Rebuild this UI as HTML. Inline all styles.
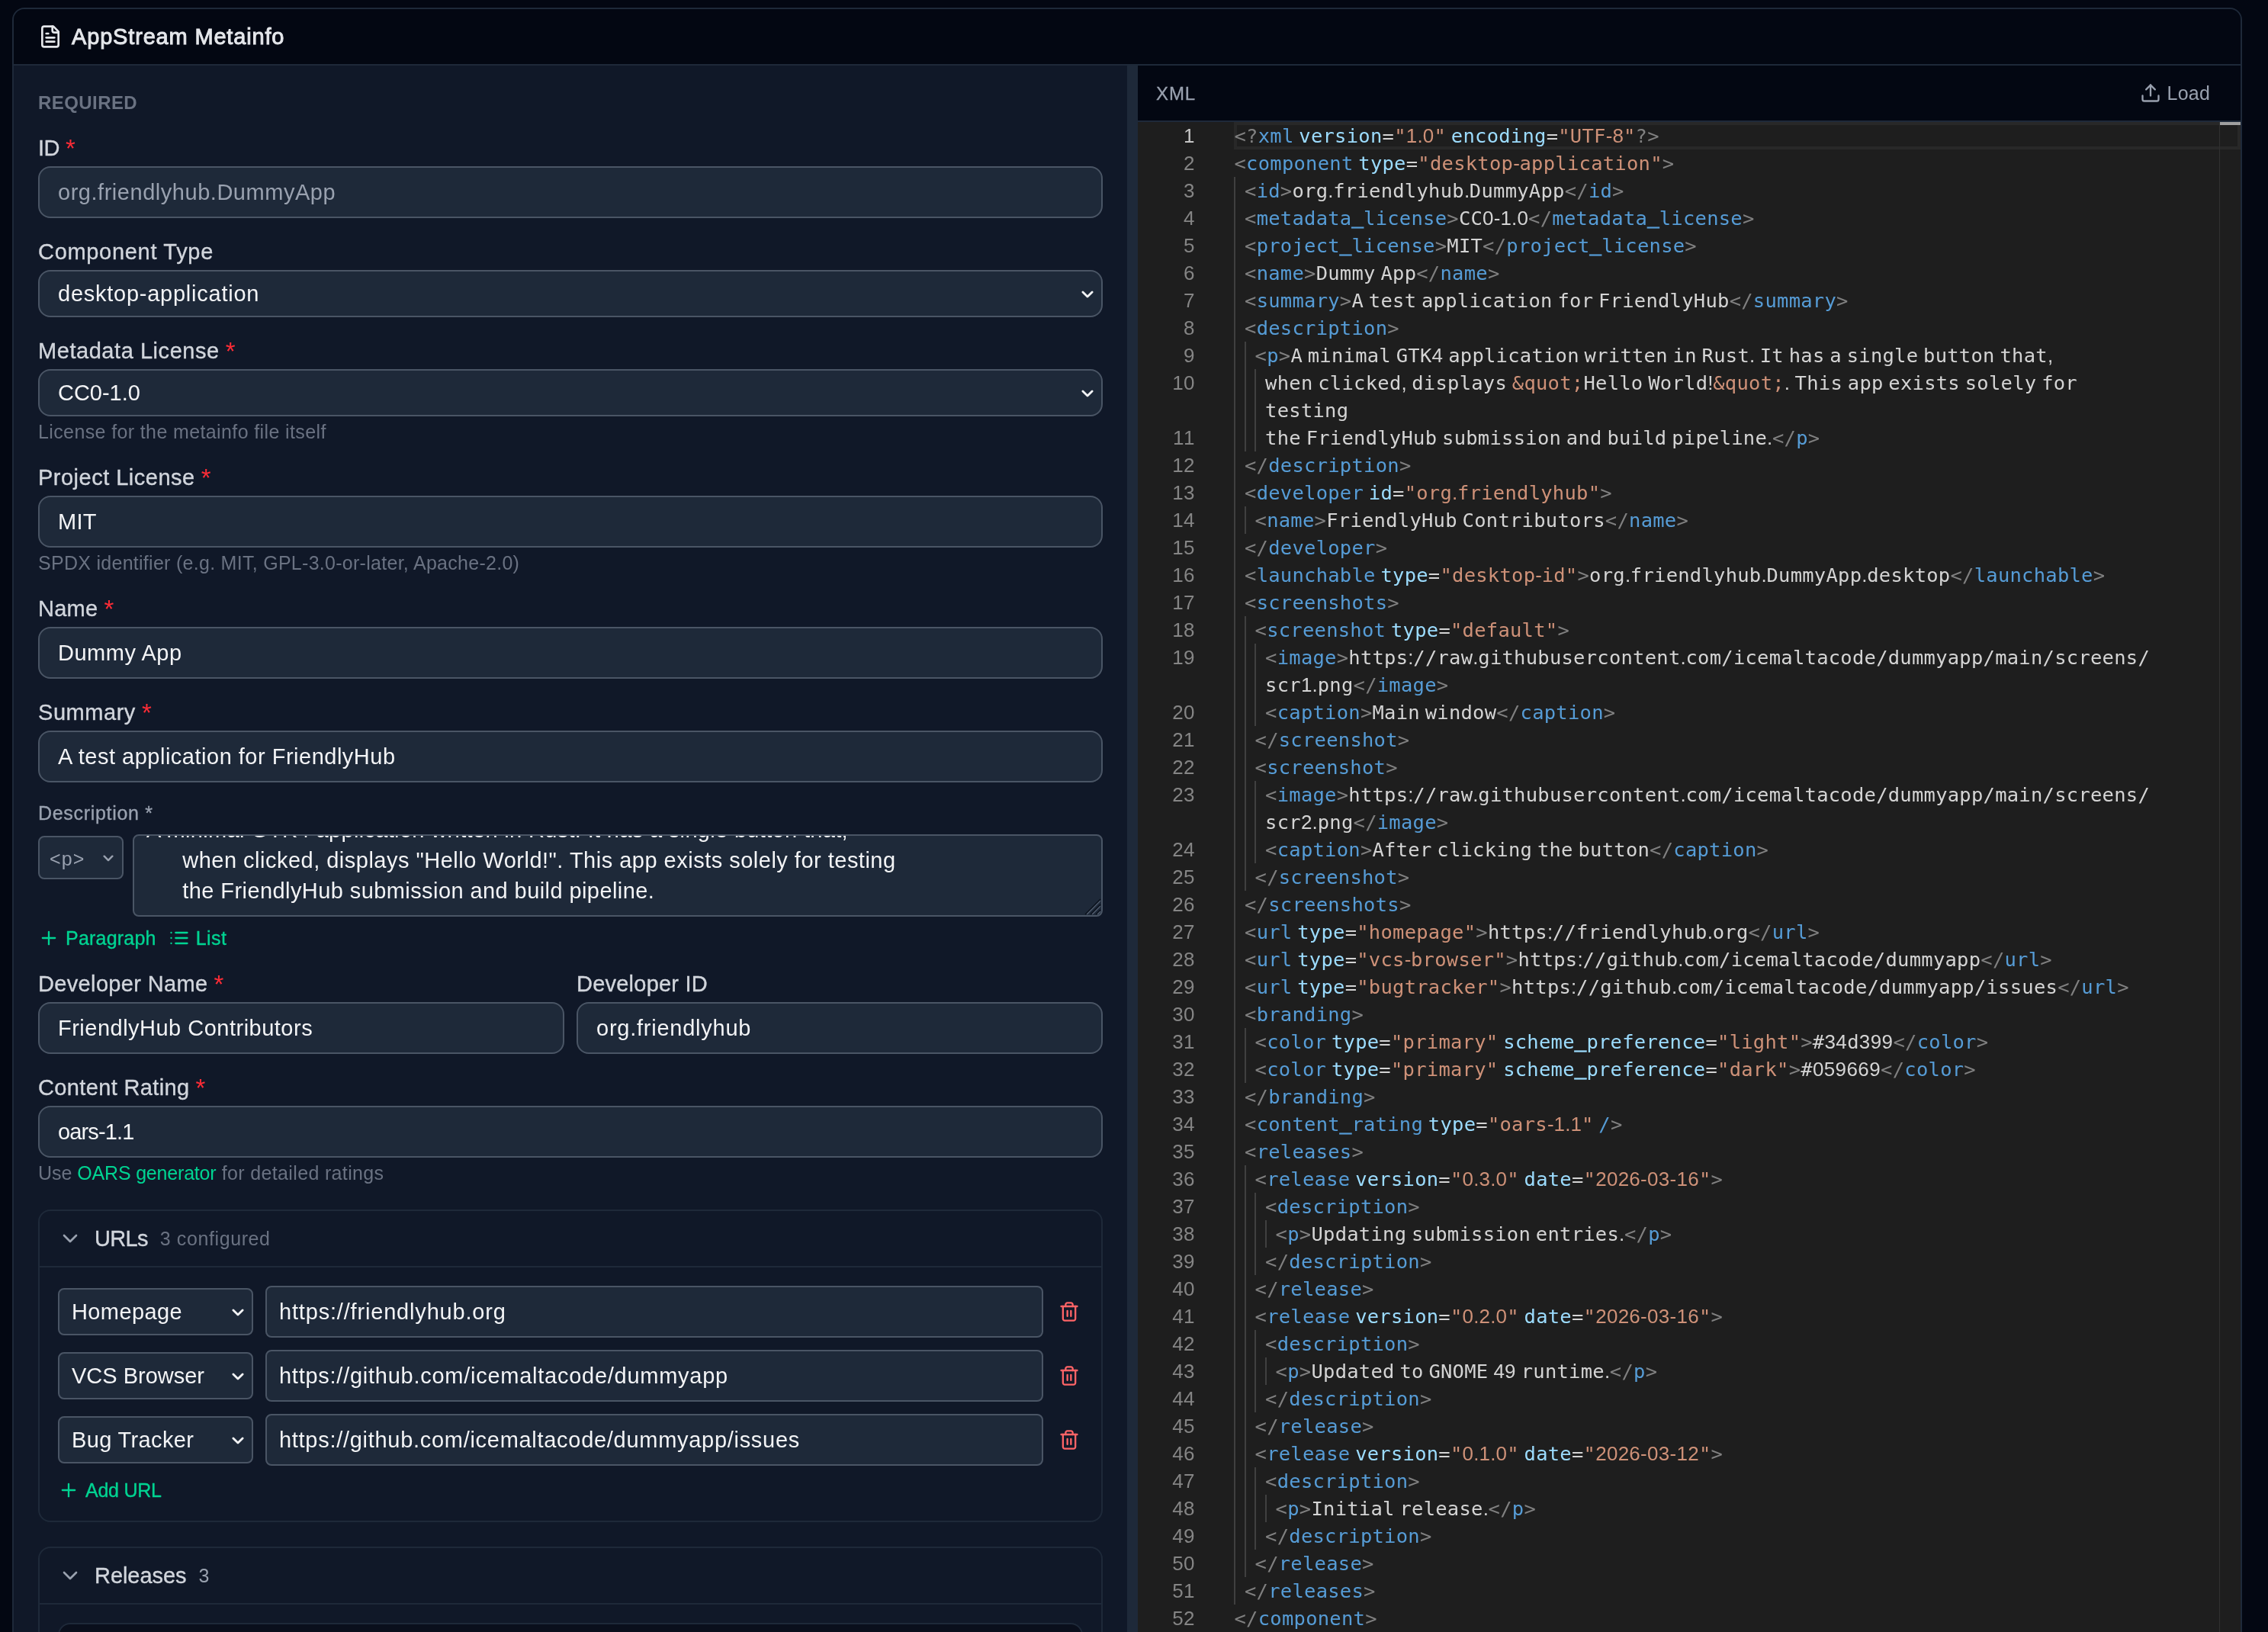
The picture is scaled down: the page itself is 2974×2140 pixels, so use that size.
<!DOCTYPE html>
<html lang="en"><head><meta charset="utf-8"><title>AppStream Metainfo</title>
<style>
*{box-sizing:border-box}
html,body{margin:0;padding:0}
body{width:2974px;height:2140px;overflow:hidden;background:#030712;position:relative;font-family:"Liberation Sans",sans-serif;font-size:29px;color:#f3f4f6}
.card{will-change:transform;position:absolute;left:16px;top:10px;width:2924px;height:2300px;border:2px solid #1e2939;border-radius:16px;background:#101828;overflow:hidden}
.hdr{position:absolute;left:0;top:0;right:0;height:74px;background:#030712;border-bottom:2px solid #1e2939;display:flex;align-items:center;padding-left:32px;color:#e5e7eb}
.hdr span{margin-left:12px;line-height:40px}
.left{position:absolute;left:0;top:74px;width:1460px;bottom:0;padding:33px 32px 0 32px;background:#101828}
.strip{position:absolute;left:1460px;top:74px;width:14px;bottom:0;background:#1e2939}
.right{position:absolute;left:1474px;top:74px;right:0;bottom:0;background:#1e1e1e}
.xh{position:absolute;left:0;top:0;right:0;height:74px;background:#030712;border-bottom:2px solid #1e2939;color:#99a1af}
.xh .xml{position:absolute;left:24px;top:21px;line-height:32px;font-size:24px;letter-spacing:.9px;-webkit-text-stroke:.3px}
.xh .load{font-size:25px;position:absolute;right:40px;top:20px;height:32px;display:flex;align-items:center;line-height:32px}
.xh .load span{margin-left:8px}
.req-h{font-size:24px;height:32px;line-height:32px;color:#6a7282}
.lbl{height:40px;line-height:40px;margin-bottom:4px;color:#d1d5dc;white-space:pre}
.req{color:#fb2c36;font-size:33px;line-height:0;position:relative;top:2px}
.inp{height:68px;border:2px solid #4a5565;border-radius:16px;background:#1e2939;padding:0 24px;line-height:64px;color:#f3f4f6;white-space:pre;position:relative;overflow:hidden}
.sel{height:62px;line-height:58px}
.hint{font-size:25px;height:32px;line-height:32px;margin-top:4px;color:#6a7282;white-space:pre}
.dlbl{font-size:25px;height:32px;line-height:32px;color:#99a1af;margin-bottom:12px}
.drow{display:flex;align-items:flex-start}
.psel{font-size:25px;width:112px;height:57px;margin-top:2px;border:2px solid #4a5565;border-radius:8px;background:#1e2939;line-height:57px;padding-left:13px;color:#99a1af;position:relative;flex:none}
.ta{margin-left:12px;flex:1;height:108px;border:2px solid #4a5565;border-radius:8px;background:#1e2939;position:relative;overflow:hidden}
.tain{margin-top:-28px;padding-left:16px;line-height:40px;white-space:pre;color:#f3f4f6}
.grip{position:absolute;right:0;bottom:0}
.dbtns{display:flex;margin-top:12px}
.gbtn{font-size:25px;display:flex;align-items:center;height:32px;line-height:32px;color:#00d492;margin-right:16px}
.gbtn span{margin-left:8px}
.two{display:flex}
.two>div{flex:1}
.two>div+div{margin-left:16px}
.box{border:2px solid #1e2939;border-radius:16px}
.bhd{height:74px;border-bottom:2px solid #1e2939;display:flex;align-items:center;padding-left:24px;line-height:40px}
.bbd{padding:24px}
.urow{display:flex;align-items:center}
.usel{width:256px;flex:none;border-radius:8px;padding:0 16px}
.uinp{flex:1;margin-left:16px;border-radius:8px;padding:0 16px}
.trash{margin-left:16px;padding:4px;color:#ff6467;flex:none}
.rel{height:200px;border:2px solid #1e2939;border-radius:16px;background:#0a0f1c}
.ed{position:absolute;left:0;top:74px;right:0;bottom:0;background:#1e1e1e;overflow:hidden;font-family:"DejaVu Sans Mono",monospace;font-size:25.5px;line-height:36px;letter-spacing:.25px;color:#d4d4d4}
.row{position:absolute;left:0;right:0;height:36px;white-space:pre}
.row i{font-style:normal;font-family:"Liberation Sans",sans-serif;font-size:26px}
.ln{position:absolute;right:1371.5px;top:0;font-weight:400;font-size:26px;font-family:"Liberation Sans",sans-serif;color:#858585}
.ln.act{color:#c6c6c6}
.row em{font-style:normal;position:relative;top:-2.4px;-webkit-text-stroke:1.2px}
.row u{position:absolute;top:0;width:2px;height:36px;background:#404040;text-decoration:none}
.code{position:absolute;top:0}
.d{color:#808080}.t{color:#569cd6}.a{color:#9cdcfe}.s{color:#ce9178}
.cl{position:absolute;left:126px;top:0;right:0;height:36px;border:4px solid #282828}
.ovr{position:absolute;right:27px;top:0;bottom:0;width:1px;background:#303030}
.ovc{position:absolute;right:0;top:0;width:27px;height:4px;background:#a0a0a0}
</style></head>
<body>
<div class="card">
<div class="hdr"><svg width="32" height="32" viewBox="0 0 24 24" fill="none" stroke="currentColor" stroke-width="2" stroke-linecap="round" stroke-linejoin="round" style="display:block;flex:none;"><path d="M15 2H6a2 2 0 0 0-2 2v16a2 2 0 0 0 2 2h12a2 2 0 0 0 2-2V7Z"/><path d="M14 2v4a2 2 0 0 0 2 2h4"/><path d="M10 9H8"/><path d="M16 13H8"/><path d="M16 17H8"/></svg><span style="font-size:29px;letter-spacing:0.83px;-webkit-text-stroke:.95px;">AppStream Metainfo</span></div>
<div class="left"><div class="req-h"><span style="font-size:24px;font-weight:700;letter-spacing:0.43px">REQUIRED</span></div><div class="fld" style="margin-top:23px"><div class="lbl"><span style="font-size:29px;letter-spacing:-0.58px;-webkit-text-stroke:.35px;">ID</span><span style="font-size:29px"> </span><span class="req">*</span></div><div class="inp" style="color:#99a1af;"><span style="font-size:29px;letter-spacing:0.53px;">org.friendlyhub.DummyApp</span></div></div><div class="fld" style="margin-top:24px"><div class="lbl"><span style="font-size:29px;letter-spacing:0.69px;-webkit-text-stroke:.35px;">Component Type</span></div><div class="inp sel" style=""><span style="font-size:29px;letter-spacing:0.75px;">desktop-application</span><svg width="16" height="10.0" viewBox="0 0 16 10" style="position:absolute;right:10px;top:50%;margin-top:-4.0px" fill="none" stroke="#f3f4f6" stroke-width="2.8" stroke-linecap="round" stroke-linejoin="round"><path d="M1.9 1.9 8 8 14.1 1.9"/></svg></div></div><div class="fld" style="margin-top:24px"><div class="lbl"><span style="font-size:29px;letter-spacing:0.55px;-webkit-text-stroke:.35px;">Metadata License</span><span style="font-size:29px"> </span><span class="req">*</span></div><div class="inp sel" style=""><span style="font-size:29px;letter-spacing:-0.02px;">CC0-1.0</span><svg width="16" height="10.0" viewBox="0 0 16 10" style="position:absolute;right:10px;top:50%;margin-top:-4.0px" fill="none" stroke="#f3f4f6" stroke-width="2.8" stroke-linecap="round" stroke-linejoin="round"><path d="M1.9 1.9 8 8 14.1 1.9"/></svg></div><div class="hint"><span style="font-size:25px;letter-spacing:0.38px;">License for the metainfo file itself</span></div></div><div class="fld" style="margin-top:24px"><div class="lbl"><span style="font-size:29px;letter-spacing:0.49px;-webkit-text-stroke:.35px;">Project License</span><span style="font-size:29px"> </span><span class="req">*</span></div><div class="inp" style=""><span style="font-size:29px;letter-spacing:0.32px;">MIT</span></div><div class="hint"><span style="font-size:25px;letter-spacing:0.28px;">SPDX identifier (e.g. MIT, GPL-3.0-or-later, Apache-2.0)</span></div></div><div class="fld" style="margin-top:24px"><div class="lbl"><span style="font-size:29px;letter-spacing:0.26px;-webkit-text-stroke:.35px;">Name</span><span style="font-size:29px"> </span><span class="req">*</span></div><div class="inp" style=""><span style="font-size:29px;letter-spacing:0.52px;">Dummy App</span></div></div><div class="fld" style="margin-top:24px"><div class="lbl"><span style="font-size:29px;letter-spacing:0.55px;-webkit-text-stroke:.35px;">Summary</span><span style="font-size:29px"> </span><span class="req">*</span></div><div class="inp" style=""><span style="font-size:29px;letter-spacing:0.50px;">A test application for FriendlyHub</span></div></div><div class="fld" style="margin-top:24px"><div class="dlbl"><span style="font-size:25px;letter-spacing:0.69px;-webkit-text-stroke:.35px;">Description *</span></div><div class="drow"><div class="psel"><span style="font-size:25px;letter-spacing:1.11px;">&lt;p&gt;</span><svg width="14" height="8.8" viewBox="0 0 16 10" style="position:absolute;right:11px;top:50%;margin-top:-3.4px" fill="none" stroke="#99a1af" stroke-width="2.8" stroke-linecap="round" stroke-linejoin="round"><path d="M1.9 1.9 8 8 14.1 1.9"/></svg></div><div class="ta"><div class="tain"><div style="padding-left:0.00px"><span style="font-size:29px;letter-spacing:0.33px;">A minimal GTK4 application written in Rust. It has a single button that,</span></div><div style="padding-left:47.25px"><span style="font-size:29px;letter-spacing:0.49px;">when clicked, displays "Hello World!". This app exists solely for testing</span></div><div style="padding-left:47.25px"><span style="font-size:29px;letter-spacing:0.42px;">the FriendlyHub submission and build pipeline.</span></div></div><svg class="grip" width="22" height="22" viewBox="0 0 22 22" fill="none"><path d="M21 1 1 21M21 8 8 21M21 15l-6 6" stroke="#0b111c" stroke-width="1.5"/><path d="M21 3.2 3.2 21M21 10.2 10.2 21M21 17.2l-3.8 3.8" stroke="#566173" stroke-width="1.2"/></svg></div></div><div class="dbtns"><div class="gbtn"><svg width="28" height="28" viewBox="0 0 24 24" fill="none" stroke="currentColor" stroke-width="2" stroke-linecap="round" stroke-linejoin="round" style="display:block;flex:none;"><path d="M5 12h14"/><path d="M12 5v14"/></svg><span style="font-size:25px;letter-spacing:0.22px;-webkit-text-stroke:.35px;">Paragraph</span></div><div class="gbtn"><svg width="28" height="28" viewBox="0 0 24 24" fill="none" stroke="currentColor" stroke-width="2" stroke-linecap="round" stroke-linejoin="round" style="display:block;flex:none;"><path d="M3 12h.01"/><path d="M3 18h.01"/><path d="M3 6h.01"/><path d="M8 12h13"/><path d="M8 18h13"/><path d="M8 6h13"/></svg><span style="font-size:25px;letter-spacing:0.45px;-webkit-text-stroke:.35px;">List</span></div></div></div><div class="fld two" style="margin-top:24px"><div><div class="lbl"><span style="font-size:29px;letter-spacing:0.35px;-webkit-text-stroke:.35px;">Developer Name</span><span style="font-size:29px"> </span><span class="req">*</span></div><div class="inp" style=""><span style="font-size:29px;letter-spacing:0.49px;">FriendlyHub Contributors</span></div></div><div><div class="lbl"><span style="font-size:29px;letter-spacing:0.23px;-webkit-text-stroke:.35px;">Developer ID</span></div><div class="inp" style=""><span style="font-size:29px;letter-spacing:0.76px;">org.friendlyhub</span></div></div></div><div class="fld" style="margin-top:24px"><div class="lbl"><span style="font-size:29px;letter-spacing:0.36px;-webkit-text-stroke:.35px;">Content Rating</span><span style="font-size:29px"> </span><span class="req">*</span></div><div class="inp" style=""><span style="font-size:29px;letter-spacing:-0.87px;">oars-1.1</span></div><div class="hint"><span style="font-size:25px;letter-spacing:-0.03px;">Use </span><span style="font-size:25px;letter-spacing:-0.19px;color:#00d492;">OARS generator</span><span style="font-size:25px;letter-spacing:0.35px;"> for detailed ratings</span></div></div><div class="box" style="margin-top:32px"><div class="bhd"><svg width="32" height="32" viewBox="0 0 24 24" fill="none" stroke="currentColor" stroke-width="2" stroke-linecap="round" stroke-linejoin="round" style="display:block;flex:none;color:#99a1af"><path d="m6 9 6 6 6-6"/></svg><span style="font-size:29px;letter-spacing:-0.68px;-webkit-text-stroke:.35px;color:#d1d5dc;margin-left:16px;">URLs</span><span style="font-size:25px;letter-spacing:0.60px;color:#6a7282;margin-left:16px;line-height:32px;">3 configured</span></div><div class="bbd"><div class="urow" style="margin-top:0px"><div class="inp sel usel"><span style="font-size:29px;letter-spacing:0.40px;">Homepage</span><svg width="16" height="10.0" viewBox="0 0 16 10" style="position:absolute;right:10px;top:50%;margin-top:-4.0px" fill="none" stroke="#f3f4f6" stroke-width="2.8" stroke-linecap="round" stroke-linejoin="round"><path d="M1.9 1.9 8 8 14.1 1.9"/></svg></div><div class="inp uinp"><span style="font-size:29px;letter-spacing:0.82px;">https://friendlyhub.org</span></div><div class="trash"><svg width="28" height="28" viewBox="0 0 24 24" fill="none" stroke="currentColor" stroke-width="2" stroke-linecap="round" stroke-linejoin="round" style="display:block;flex:none;"><path d="M3 6h18"/><path d="M19 6v14c0 1-1 2-2 2H7c-1 0-2-1-2-2V6"/><path d="M8 6V4c0-1 1-2 2-2h4c1 0 2 1 2 2v2"/><path d="M10 11v6"/><path d="M14 11v6"/></svg></div></div><div class="urow" style="margin-top:16px"><div class="inp sel usel"><span style="font-size:29px;letter-spacing:-0.01px;">VCS Browser</span><svg width="16" height="10.0" viewBox="0 0 16 10" style="position:absolute;right:10px;top:50%;margin-top:-4.0px" fill="none" stroke="#f3f4f6" stroke-width="2.8" stroke-linecap="round" stroke-linejoin="round"><path d="M1.9 1.9 8 8 14.1 1.9"/></svg></div><div class="inp uinp"><span style="font-size:29px;letter-spacing:0.74px;">https://github.com/icemaltacode/dummyapp</span></div><div class="trash"><svg width="28" height="28" viewBox="0 0 24 24" fill="none" stroke="currentColor" stroke-width="2" stroke-linecap="round" stroke-linejoin="round" style="display:block;flex:none;"><path d="M3 6h18"/><path d="M19 6v14c0 1-1 2-2 2H7c-1 0-2-1-2-2V6"/><path d="M8 6V4c0-1 1-2 2-2h4c1 0 2 1 2 2v2"/><path d="M10 11v6"/><path d="M14 11v6"/></svg></div></div><div class="urow" style="margin-top:16px"><div class="inp sel usel"><span style="font-size:29px;letter-spacing:0.36px;">Bug Tracker</span><svg width="16" height="10.0" viewBox="0 0 16 10" style="position:absolute;right:10px;top:50%;margin-top:-4.0px" fill="none" stroke="#f3f4f6" stroke-width="2.8" stroke-linecap="round" stroke-linejoin="round"><path d="M1.9 1.9 8 8 14.1 1.9"/></svg></div><div class="inp uinp"><span style="font-size:29px;letter-spacing:0.71px;">https://github.com/icemaltacode/dummyapp/issues</span></div><div class="trash"><svg width="28" height="28" viewBox="0 0 24 24" fill="none" stroke="currentColor" stroke-width="2" stroke-linecap="round" stroke-linejoin="round" style="display:block;flex:none;"><path d="M3 6h18"/><path d="M19 6v14c0 1-1 2-2 2H7c-1 0-2-1-2-2V6"/><path d="M8 6V4c0-1 1-2 2-2h4c1 0 2 1 2 2v2"/><path d="M10 11v6"/><path d="M14 11v6"/></svg></div></div><div class="gbtn" style="margin-top:16px"><svg width="28" height="28" viewBox="0 0 24 24" fill="none" stroke="currentColor" stroke-width="2" stroke-linecap="round" stroke-linejoin="round" style="display:block;flex:none;"><path d="M5 12h14"/><path d="M12 5v14"/></svg><span style="font-size:25px;letter-spacing:-0.24px;-webkit-text-stroke:.35px;">Add URL</span></div></div></div><div class="box" style="margin-top:32px"><div class="bhd"><svg width="32" height="32" viewBox="0 0 24 24" fill="none" stroke="currentColor" stroke-width="2" stroke-linecap="round" stroke-linejoin="round" style="display:block;flex:none;color:#99a1af"><path d="m6 9 6 6 6-6"/></svg><span style="font-size:29px;letter-spacing:-0.05px;-webkit-text-stroke:.35px;color:#d1d5dc;margin-left:16px;">Releases</span><span style="font-size:25px;letter-spacing:0.92px;color:#99a1af;margin-left:16px;line-height:32px;">3</span></div><div class="bbd"><div class="rel"></div></div></div></div>
<div class="strip"></div>
<div class="right"><div class="xh"><span class="xml">XML</span><div class="load"><svg width="28" height="28" viewBox="0 0 24 24" fill="none" stroke="currentColor" stroke-width="2" stroke-linecap="round" stroke-linejoin="round" style="display:block;flex:none;"><path d="M21 15v4a2 2 0 0 1-2 2H5a2 2 0 0 1-2-2v-4"/><path d="m17 8-5-5-5 5"/><path d="M12 3v12"/></svg><span style="font-size:25px;letter-spacing:0.19px;">Load</span></div></div>
<div class="ed"><div class="cl"></div><div class="row" style="top:0px"><b class="ln act" style="letter-spacing:0.41px;margin-right:-0.41px">1</b><span class="code" style="left:126.50px"><span class="d">&lt;?</span><span class="t">xml</span><i style="letter-spacing:-0.47px"> </i><span class="a">version</span>=<span class="s">"<i style="letter-spacing:0.19px">1.0</i>"</span><i style="letter-spacing:-0.47px"> </i><span class="a">encoding</span>=<span class="s">"UTF<i style="letter-spacing:0.06px">-8</i>"</span><span class="d">?&gt;</span></span></div><div class="row" style="top:36px"><b class="ln" style="letter-spacing:0.41px;margin-right:-0.41px">2</b><span class="code" style="left:126.50px"><span class="d">&lt;</span><span class="t">component</span><i style="letter-spacing:-0.47px"> </i><span class="a">type</span>=<span class="s">"desktop<i style="letter-spacing:-0.30px">-</i>application"</span><span class="d">&gt;</span></span></div><div class="row" style="top:72px"><b class="ln" style="letter-spacing:0.41px;margin-right:-0.41px">3</b><u style="left:126px"></u><span class="code" style="left:140.03px"><span class="d">&lt;</span><span class="t">id</span><span class="d">&gt;</span>org<i style="letter-spacing:-0.27px">.</i>friendlyhub<i style="letter-spacing:-0.27px">.</i>DummyApp<span class="d">&lt;/</span><span class="t">id</span><span class="d">&gt;</span></span></div><div class="row" style="top:108px"><b class="ln" style="letter-spacing:0.41px;margin-right:-0.41px">4</b><u style="left:126px"></u><span class="code" style="left:140.03px"><span class="d">&lt;</span><span class="t">metadata<em>_</em>license</span><span class="d">&gt;</span>CC<i style="letter-spacing:0.14px">0-1.0</i><span class="d">&lt;/</span><span class="t">metadata<em>_</em>license</span><span class="d">&gt;</span></span></div><div class="row" style="top:144px"><b class="ln" style="letter-spacing:0.41px;margin-right:-0.41px">5</b><u style="left:126px"></u><span class="code" style="left:140.03px"><span class="d">&lt;</span><span class="t">project<em>_</em>license</span><span class="d">&gt;</span>MIT<span class="d">&lt;/</span><span class="t">project<em>_</em>license</span><span class="d">&gt;</span></span></div><div class="row" style="top:180px"><b class="ln" style="letter-spacing:0.41px;margin-right:-0.41px">6</b><u style="left:126px"></u><span class="code" style="left:140.03px"><span class="d">&lt;</span><span class="t">name</span><span class="d">&gt;</span>Dummy<i style="letter-spacing:-0.47px"> </i>App<span class="d">&lt;/</span><span class="t">name</span><span class="d">&gt;</span></span></div><div class="row" style="top:216px"><b class="ln" style="letter-spacing:0.41px;margin-right:-0.41px">7</b><u style="left:126px"></u><span class="code" style="left:140.03px"><span class="d">&lt;</span><span class="t">summary</span><span class="d">&gt;</span>A<i style="letter-spacing:-0.47px"> </i>test<i style="letter-spacing:-0.47px"> </i>application<i style="letter-spacing:-0.47px"> </i>for<i style="letter-spacing:-0.47px"> </i>FriendlyHub<span class="d">&lt;/</span><span class="t">summary</span><span class="d">&gt;</span></span></div><div class="row" style="top:252px"><b class="ln" style="letter-spacing:0.41px;margin-right:-0.41px">8</b><u style="left:126px"></u><span class="code" style="left:140.03px"><span class="d">&lt;</span><span class="t">description</span><span class="d">&gt;</span></span></div><div class="row" style="top:288px"><b class="ln" style="letter-spacing:0.41px;margin-right:-0.41px">9</b><u style="left:126px"></u><u style="left:140px"></u><span class="code" style="left:153.56px"><span class="d">&lt;</span><span class="t">p</span><span class="d">&gt;</span>A<i style="letter-spacing:-0.47px"> </i>minimal<i style="letter-spacing:-0.47px"> </i>GTK<i style="letter-spacing:-0.02px">4 </i>application<i style="letter-spacing:-0.47px"> </i>written<i style="letter-spacing:-0.47px"> </i>in<i style="letter-spacing:-0.47px"> </i>Rust<i style="letter-spacing:-0.36px">. </i>It<i style="letter-spacing:-0.47px"> </i>has<i style="letter-spacing:-0.47px"> </i>a<i style="letter-spacing:-0.47px"> </i>single<i style="letter-spacing:-0.47px"> </i>button<i style="letter-spacing:-0.47px"> </i>that<i style="letter-spacing:-0.27px">,</i></span></div><div class="row" style="top:324px"><b class="ln" style="letter-spacing:0.41px;margin-right:-0.41px">10</b><u style="left:126px"></u><u style="left:140px"></u><u style="left:153px"></u><span class="code" style="left:167.09px">when<i style="letter-spacing:-0.47px"> </i>clicked<i style="letter-spacing:-0.36px">, </i>displays<i style="letter-spacing:-0.47px"> </i><span class="s">&amp;quot;</span>Hello<i style="letter-spacing:-0.47px"> </i>World<i style="letter-spacing:-0.23px">!</i><span class="s">&amp;quot;</span><i style="letter-spacing:-0.36px">. </i>This<i style="letter-spacing:-0.47px"> </i>app<i style="letter-spacing:-0.47px"> </i>exists<i style="letter-spacing:-0.47px"> </i>solely<i style="letter-spacing:-0.47px"> </i>for<i style="letter-spacing:-0.47px"> </i></span></div><div class="row" style="top:360px"><u style="left:126px"></u><u style="left:140px"></u><u style="left:153px"></u><span class="code" style="left:167.09px">testing</span></div><div class="row" style="top:396px"><b class="ln" style="letter-spacing:1.38px;margin-right:-1.38px">11</b><u style="left:126px"></u><u style="left:140px"></u><u style="left:153px"></u><span class="code" style="left:167.09px">the<i style="letter-spacing:-0.47px"> </i>FriendlyHub<i style="letter-spacing:-0.47px"> </i>submission<i style="letter-spacing:-0.47px"> </i>and<i style="letter-spacing:-0.47px"> </i>build<i style="letter-spacing:-0.47px"> </i>pipeline<i style="letter-spacing:-0.27px">.</i><span class="d">&lt;/</span><span class="t">p</span><span class="d">&gt;</span></span></div><div class="row" style="top:432px"><b class="ln" style="letter-spacing:0.41px;margin-right:-0.41px">12</b><u style="left:126px"></u><span class="code" style="left:140.03px"><span class="d">&lt;/</span><span class="t">description</span><span class="d">&gt;</span></span></div><div class="row" style="top:468px"><b class="ln" style="letter-spacing:0.41px;margin-right:-0.41px">13</b><u style="left:126px"></u><span class="code" style="left:140.03px"><span class="d">&lt;</span><span class="t">developer</span><i style="letter-spacing:-0.47px"> </i><span class="a">id</span>=<span class="s">"org<i style="letter-spacing:-0.27px">.</i>friendlyhub"</span><span class="d">&gt;</span></span></div><div class="row" style="top:504px"><b class="ln" style="letter-spacing:0.41px;margin-right:-0.41px">14</b><u style="left:126px"></u><u style="left:140px"></u><span class="code" style="left:153.56px"><span class="d">&lt;</span><span class="t">name</span><span class="d">&gt;</span>FriendlyHub<i style="letter-spacing:-0.47px"> </i>Contributors<span class="d">&lt;/</span><span class="t">name</span><span class="d">&gt;</span></span></div><div class="row" style="top:540px"><b class="ln" style="letter-spacing:0.41px;margin-right:-0.41px">15</b><u style="left:126px"></u><span class="code" style="left:140.03px"><span class="d">&lt;/</span><span class="t">developer</span><span class="d">&gt;</span></span></div><div class="row" style="top:576px"><b class="ln" style="letter-spacing:0.41px;margin-right:-0.41px">16</b><u style="left:126px"></u><span class="code" style="left:140.03px"><span class="d">&lt;</span><span class="t">launchable</span><i style="letter-spacing:-0.47px"> </i><span class="a">type</span>=<span class="s">"desktop<i style="letter-spacing:-0.30px">-</i>id"</span><span class="d">&gt;</span>org<i style="letter-spacing:-0.27px">.</i>friendlyhub<i style="letter-spacing:-0.27px">.</i>DummyApp<i style="letter-spacing:-0.27px">.</i>desktop<span class="d">&lt;/</span><span class="t">launchable</span><span class="d">&gt;</span></span></div><div class="row" style="top:612px"><b class="ln" style="letter-spacing:0.41px;margin-right:-0.41px">17</b><u style="left:126px"></u><span class="code" style="left:140.03px"><span class="d">&lt;</span><span class="t">screenshots</span><span class="d">&gt;</span></span></div><div class="row" style="top:648px"><b class="ln" style="letter-spacing:0.41px;margin-right:-0.41px">18</b><u style="left:126px"></u><u style="left:140px"></u><span class="code" style="left:153.56px"><span class="d">&lt;</span><span class="t">screenshot</span><i style="letter-spacing:-0.47px"> </i><span class="a">type</span>=<span class="s">"default"</span><span class="d">&gt;</span></span></div><div class="row" style="top:684px"><b class="ln" style="letter-spacing:0.41px;margin-right:-0.41px">19</b><u style="left:126px"></u><u style="left:140px"></u><u style="left:153px"></u><span class="code" style="left:167.09px"><span class="d">&lt;</span><span class="t">image</span><span class="d">&gt;</span>https<i style="letter-spacing:-0.27px">:</i>//raw<i style="letter-spacing:-0.27px">.</i>githubusercontent<i style="letter-spacing:-0.27px">.</i>com/icemaltacode/dummyapp/main/screens/</span></div><div class="row" style="top:720px"><u style="left:126px"></u><u style="left:140px"></u><u style="left:153px"></u><span class="code" style="left:167.09px">scr<i style="letter-spacing:0.08px">1.</i>png<span class="d">&lt;/</span><span class="t">image</span><span class="d">&gt;</span></span></div><div class="row" style="top:756px"><b class="ln" style="letter-spacing:0.41px;margin-right:-0.41px">20</b><u style="left:126px"></u><u style="left:140px"></u><u style="left:153px"></u><span class="code" style="left:167.09px"><span class="d">&lt;</span><span class="t">caption</span><span class="d">&gt;</span>Main<i style="letter-spacing:-0.47px"> </i>window<span class="d">&lt;/</span><span class="t">caption</span><span class="d">&gt;</span></span></div><div class="row" style="top:792px"><b class="ln" style="letter-spacing:0.41px;margin-right:-0.41px">21</b><u style="left:126px"></u><u style="left:140px"></u><span class="code" style="left:153.56px"><span class="d">&lt;/</span><span class="t">screenshot</span><span class="d">&gt;</span></span></div><div class="row" style="top:828px"><b class="ln" style="letter-spacing:0.41px;margin-right:-0.41px">22</b><u style="left:126px"></u><u style="left:140px"></u><span class="code" style="left:153.56px"><span class="d">&lt;</span><span class="t">screenshot</span><span class="d">&gt;</span></span></div><div class="row" style="top:864px"><b class="ln" style="letter-spacing:0.41px;margin-right:-0.41px">23</b><u style="left:126px"></u><u style="left:140px"></u><u style="left:153px"></u><span class="code" style="left:167.09px"><span class="d">&lt;</span><span class="t">image</span><span class="d">&gt;</span>https<i style="letter-spacing:-0.27px">:</i>//raw<i style="letter-spacing:-0.27px">.</i>githubusercontent<i style="letter-spacing:-0.27px">.</i>com/icemaltacode/dummyapp/main/screens/</span></div><div class="row" style="top:900px"><u style="left:126px"></u><u style="left:140px"></u><u style="left:153px"></u><span class="code" style="left:167.09px">scr<i style="letter-spacing:0.08px">2.</i>png<span class="d">&lt;/</span><span class="t">image</span><span class="d">&gt;</span></span></div><div class="row" style="top:936px"><b class="ln" style="letter-spacing:0.41px;margin-right:-0.41px">24</b><u style="left:126px"></u><u style="left:140px"></u><u style="left:153px"></u><span class="code" style="left:167.09px"><span class="d">&lt;</span><span class="t">caption</span><span class="d">&gt;</span>After<i style="letter-spacing:-0.47px"> </i>clicking<i style="letter-spacing:-0.47px"> </i>the<i style="letter-spacing:-0.47px"> </i>button<span class="d">&lt;/</span><span class="t">caption</span><span class="d">&gt;</span></span></div><div class="row" style="top:972px"><b class="ln" style="letter-spacing:0.41px;margin-right:-0.41px">25</b><u style="left:126px"></u><u style="left:140px"></u><span class="code" style="left:153.56px"><span class="d">&lt;/</span><span class="t">screenshot</span><span class="d">&gt;</span></span></div><div class="row" style="top:1008px"><b class="ln" style="letter-spacing:0.41px;margin-right:-0.41px">26</b><u style="left:126px"></u><span class="code" style="left:140.03px"><span class="d">&lt;/</span><span class="t">screenshots</span><span class="d">&gt;</span></span></div><div class="row" style="top:1044px"><b class="ln" style="letter-spacing:0.41px;margin-right:-0.41px">27</b><u style="left:126px"></u><span class="code" style="left:140.03px"><span class="d">&lt;</span><span class="t">url</span><i style="letter-spacing:-0.47px"> </i><span class="a">type</span>=<span class="s">"homepage"</span><span class="d">&gt;</span>https<i style="letter-spacing:-0.27px">:</i>//friendlyhub<i style="letter-spacing:-0.27px">.</i>org<span class="d">&lt;/</span><span class="t">url</span><span class="d">&gt;</span></span></div><div class="row" style="top:1080px"><b class="ln" style="letter-spacing:0.41px;margin-right:-0.41px">28</b><u style="left:126px"></u><span class="code" style="left:140.03px"><span class="d">&lt;</span><span class="t">url</span><i style="letter-spacing:-0.47px"> </i><span class="a">type</span>=<span class="s">"vcs<i style="letter-spacing:-0.30px">-</i>browser"</span><span class="d">&gt;</span>https<i style="letter-spacing:-0.27px">:</i>//github<i style="letter-spacing:-0.27px">.</i>com/icemaltacode/dummyapp<span class="d">&lt;/</span><span class="t">url</span><span class="d">&gt;</span></span></div><div class="row" style="top:1116px"><b class="ln" style="letter-spacing:0.41px;margin-right:-0.41px">29</b><u style="left:126px"></u><span class="code" style="left:140.03px"><span class="d">&lt;</span><span class="t">url</span><i style="letter-spacing:-0.47px"> </i><span class="a">type</span>=<span class="s">"bugtracker"</span><span class="d">&gt;</span>https<i style="letter-spacing:-0.27px">:</i>//github<i style="letter-spacing:-0.27px">.</i>com/icemaltacode/dummyapp/issues<span class="d">&lt;/</span><span class="t">url</span><span class="d">&gt;</span></span></div><div class="row" style="top:1152px"><b class="ln" style="letter-spacing:0.41px;margin-right:-0.41px">30</b><u style="left:126px"></u><span class="code" style="left:140.03px"><span class="d">&lt;</span><span class="t">branding</span><span class="d">&gt;</span></span></div><div class="row" style="top:1188px"><b class="ln" style="letter-spacing:0.41px;margin-right:-0.41px">31</b><u style="left:126px"></u><u style="left:140px"></u><span class="code" style="left:153.56px"><span class="d">&lt;</span><span class="t">color</span><i style="letter-spacing:-0.47px"> </i><span class="a">type</span>=<span class="s">"primary"</span><i style="letter-spacing:-0.47px"> </i><span class="a">scheme<em>_</em>preference</span>=<span class="s">"light"</span><span class="d">&gt;</span>#<i style="letter-spacing:0.41px">34</i>d<i style="letter-spacing:0.41px">399</i><span class="d">&lt;/</span><span class="t">color</span><span class="d">&gt;</span></span></div><div class="row" style="top:1224px"><b class="ln" style="letter-spacing:0.41px;margin-right:-0.41px">32</b><u style="left:126px"></u><u style="left:140px"></u><span class="code" style="left:153.56px"><span class="d">&lt;</span><span class="t">color</span><i style="letter-spacing:-0.47px"> </i><span class="a">type</span>=<span class="s">"primary"</span><i style="letter-spacing:-0.47px"> </i><span class="a">scheme<em>_</em>preference</span>=<span class="s">"dark"</span><span class="d">&gt;</span>#<i style="letter-spacing:0.41px">059669</i><span class="d">&lt;/</span><span class="t">color</span><span class="d">&gt;</span></span></div><div class="row" style="top:1260px"><b class="ln" style="letter-spacing:0.41px;margin-right:-0.41px">33</b><u style="left:126px"></u><span class="code" style="left:140.03px"><span class="d">&lt;/</span><span class="t">branding</span><span class="d">&gt;</span></span></div><div class="row" style="top:1296px"><b class="ln" style="letter-spacing:0.41px;margin-right:-0.41px">34</b><u style="left:126px"></u><span class="code" style="left:140.03px"><span class="d">&lt;</span><span class="t">content<em>_</em>rating</span><i style="letter-spacing:-0.47px"> </i><span class="a">type</span>=<span class="s">"oars<i style="letter-spacing:0.07px">-1.1</i>"</span><i style="letter-spacing:-0.47px"> </i><span class="t">/</span><span class="d">&gt;</span></span></div><div class="row" style="top:1332px"><b class="ln" style="letter-spacing:0.41px;margin-right:-0.41px">35</b><u style="left:126px"></u><span class="code" style="left:140.03px"><span class="d">&lt;</span><span class="t">releases</span><span class="d">&gt;</span></span></div><div class="row" style="top:1368px"><b class="ln" style="letter-spacing:0.41px;margin-right:-0.41px">36</b><u style="left:126px"></u><u style="left:140px"></u><span class="code" style="left:153.56px"><span class="d">&lt;</span><span class="t">release</span><i style="letter-spacing:-0.47px"> </i><span class="a">version</span>=<span class="s">"<i style="letter-spacing:0.15px">0.3.0</i>"</span><i style="letter-spacing:-0.47px"> </i><span class="a">date</span>=<span class="s">"<i style="letter-spacing:0.27px">2026-03-16</i>"</span><span class="d">&gt;</span></span></div><div class="row" style="top:1404px"><b class="ln" style="letter-spacing:0.41px;margin-right:-0.41px">37</b><u style="left:126px"></u><u style="left:140px"></u><u style="left:153px"></u><span class="code" style="left:167.09px"><span class="d">&lt;</span><span class="t">description</span><span class="d">&gt;</span></span></div><div class="row" style="top:1440px"><b class="ln" style="letter-spacing:0.41px;margin-right:-0.41px">38</b><u style="left:126px"></u><u style="left:140px"></u><u style="left:153px"></u><u style="left:167px"></u><span class="code" style="left:180.62px"><span class="d">&lt;</span><span class="t">p</span><span class="d">&gt;</span>Updating<i style="letter-spacing:-0.47px"> </i>submission<i style="letter-spacing:-0.47px"> </i>entries<i style="letter-spacing:-0.27px">.</i><span class="d">&lt;/</span><span class="t">p</span><span class="d">&gt;</span></span></div><div class="row" style="top:1476px"><b class="ln" style="letter-spacing:0.41px;margin-right:-0.41px">39</b><u style="left:126px"></u><u style="left:140px"></u><u style="left:153px"></u><span class="code" style="left:167.09px"><span class="d">&lt;/</span><span class="t">description</span><span class="d">&gt;</span></span></div><div class="row" style="top:1512px"><b class="ln" style="letter-spacing:0.41px;margin-right:-0.41px">40</b><u style="left:126px"></u><u style="left:140px"></u><span class="code" style="left:153.56px"><span class="d">&lt;/</span><span class="t">release</span><span class="d">&gt;</span></span></div><div class="row" style="top:1548px"><b class="ln" style="letter-spacing:0.41px;margin-right:-0.41px">41</b><u style="left:126px"></u><u style="left:140px"></u><span class="code" style="left:153.56px"><span class="d">&lt;</span><span class="t">release</span><i style="letter-spacing:-0.47px"> </i><span class="a">version</span>=<span class="s">"<i style="letter-spacing:0.15px">0.2.0</i>"</span><i style="letter-spacing:-0.47px"> </i><span class="a">date</span>=<span class="s">"<i style="letter-spacing:0.27px">2026-03-16</i>"</span><span class="d">&gt;</span></span></div><div class="row" style="top:1584px"><b class="ln" style="letter-spacing:0.41px;margin-right:-0.41px">42</b><u style="left:126px"></u><u style="left:140px"></u><u style="left:153px"></u><span class="code" style="left:167.09px"><span class="d">&lt;</span><span class="t">description</span><span class="d">&gt;</span></span></div><div class="row" style="top:1620px"><b class="ln" style="letter-spacing:0.41px;margin-right:-0.41px">43</b><u style="left:126px"></u><u style="left:140px"></u><u style="left:153px"></u><u style="left:167px"></u><span class="code" style="left:180.62px"><span class="d">&lt;</span><span class="t">p</span><span class="d">&gt;</span>Updated<i style="letter-spacing:-0.47px"> </i>to<i style="letter-spacing:-0.47px"> </i>GNOME<i style="letter-spacing:-0.03px"> 49 </i>runtime<i style="letter-spacing:-0.27px">.</i><span class="d">&lt;/</span><span class="t">p</span><span class="d">&gt;</span></span></div><div class="row" style="top:1656px"><b class="ln" style="letter-spacing:0.41px;margin-right:-0.41px">44</b><u style="left:126px"></u><u style="left:140px"></u><u style="left:153px"></u><span class="code" style="left:167.09px"><span class="d">&lt;/</span><span class="t">description</span><span class="d">&gt;</span></span></div><div class="row" style="top:1692px"><b class="ln" style="letter-spacing:0.41px;margin-right:-0.41px">45</b><u style="left:126px"></u><u style="left:140px"></u><span class="code" style="left:153.56px"><span class="d">&lt;/</span><span class="t">release</span><span class="d">&gt;</span></span></div><div class="row" style="top:1728px"><b class="ln" style="letter-spacing:0.41px;margin-right:-0.41px">46</b><u style="left:126px"></u><u style="left:140px"></u><span class="code" style="left:153.56px"><span class="d">&lt;</span><span class="t">release</span><i style="letter-spacing:-0.47px"> </i><span class="a">version</span>=<span class="s">"<i style="letter-spacing:0.15px">0.1.0</i>"</span><i style="letter-spacing:-0.47px"> </i><span class="a">date</span>=<span class="s">"<i style="letter-spacing:0.27px">2026-03-12</i>"</span><span class="d">&gt;</span></span></div><div class="row" style="top:1764px"><b class="ln" style="letter-spacing:0.41px;margin-right:-0.41px">47</b><u style="left:126px"></u><u style="left:140px"></u><u style="left:153px"></u><span class="code" style="left:167.09px"><span class="d">&lt;</span><span class="t">description</span><span class="d">&gt;</span></span></div><div class="row" style="top:1800px"><b class="ln" style="letter-spacing:0.41px;margin-right:-0.41px">48</b><u style="left:126px"></u><u style="left:140px"></u><u style="left:153px"></u><u style="left:167px"></u><span class="code" style="left:180.62px"><span class="d">&lt;</span><span class="t">p</span><span class="d">&gt;</span>Initial<i style="letter-spacing:-0.47px"> </i>release<i style="letter-spacing:-0.27px">.</i><span class="d">&lt;/</span><span class="t">p</span><span class="d">&gt;</span></span></div><div class="row" style="top:1836px"><b class="ln" style="letter-spacing:0.41px;margin-right:-0.41px">49</b><u style="left:126px"></u><u style="left:140px"></u><u style="left:153px"></u><span class="code" style="left:167.09px"><span class="d">&lt;/</span><span class="t">description</span><span class="d">&gt;</span></span></div><div class="row" style="top:1872px"><b class="ln" style="letter-spacing:0.41px;margin-right:-0.41px">50</b><u style="left:126px"></u><u style="left:140px"></u><span class="code" style="left:153.56px"><span class="d">&lt;/</span><span class="t">release</span><span class="d">&gt;</span></span></div><div class="row" style="top:1908px"><b class="ln" style="letter-spacing:0.41px;margin-right:-0.41px">51</b><u style="left:126px"></u><span class="code" style="left:140.03px"><span class="d">&lt;/</span><span class="t">releases</span><span class="d">&gt;</span></span></div><div class="row" style="top:1944px"><b class="ln" style="letter-spacing:0.41px;margin-right:-0.41px">52</b><span class="code" style="left:126.50px"><span class="d">&lt;/</span><span class="t">component</span><span class="d">&gt;</span></span></div><div class="ovr"></div><div class="ovc"></div></div></div>
</div>
</body></html>
